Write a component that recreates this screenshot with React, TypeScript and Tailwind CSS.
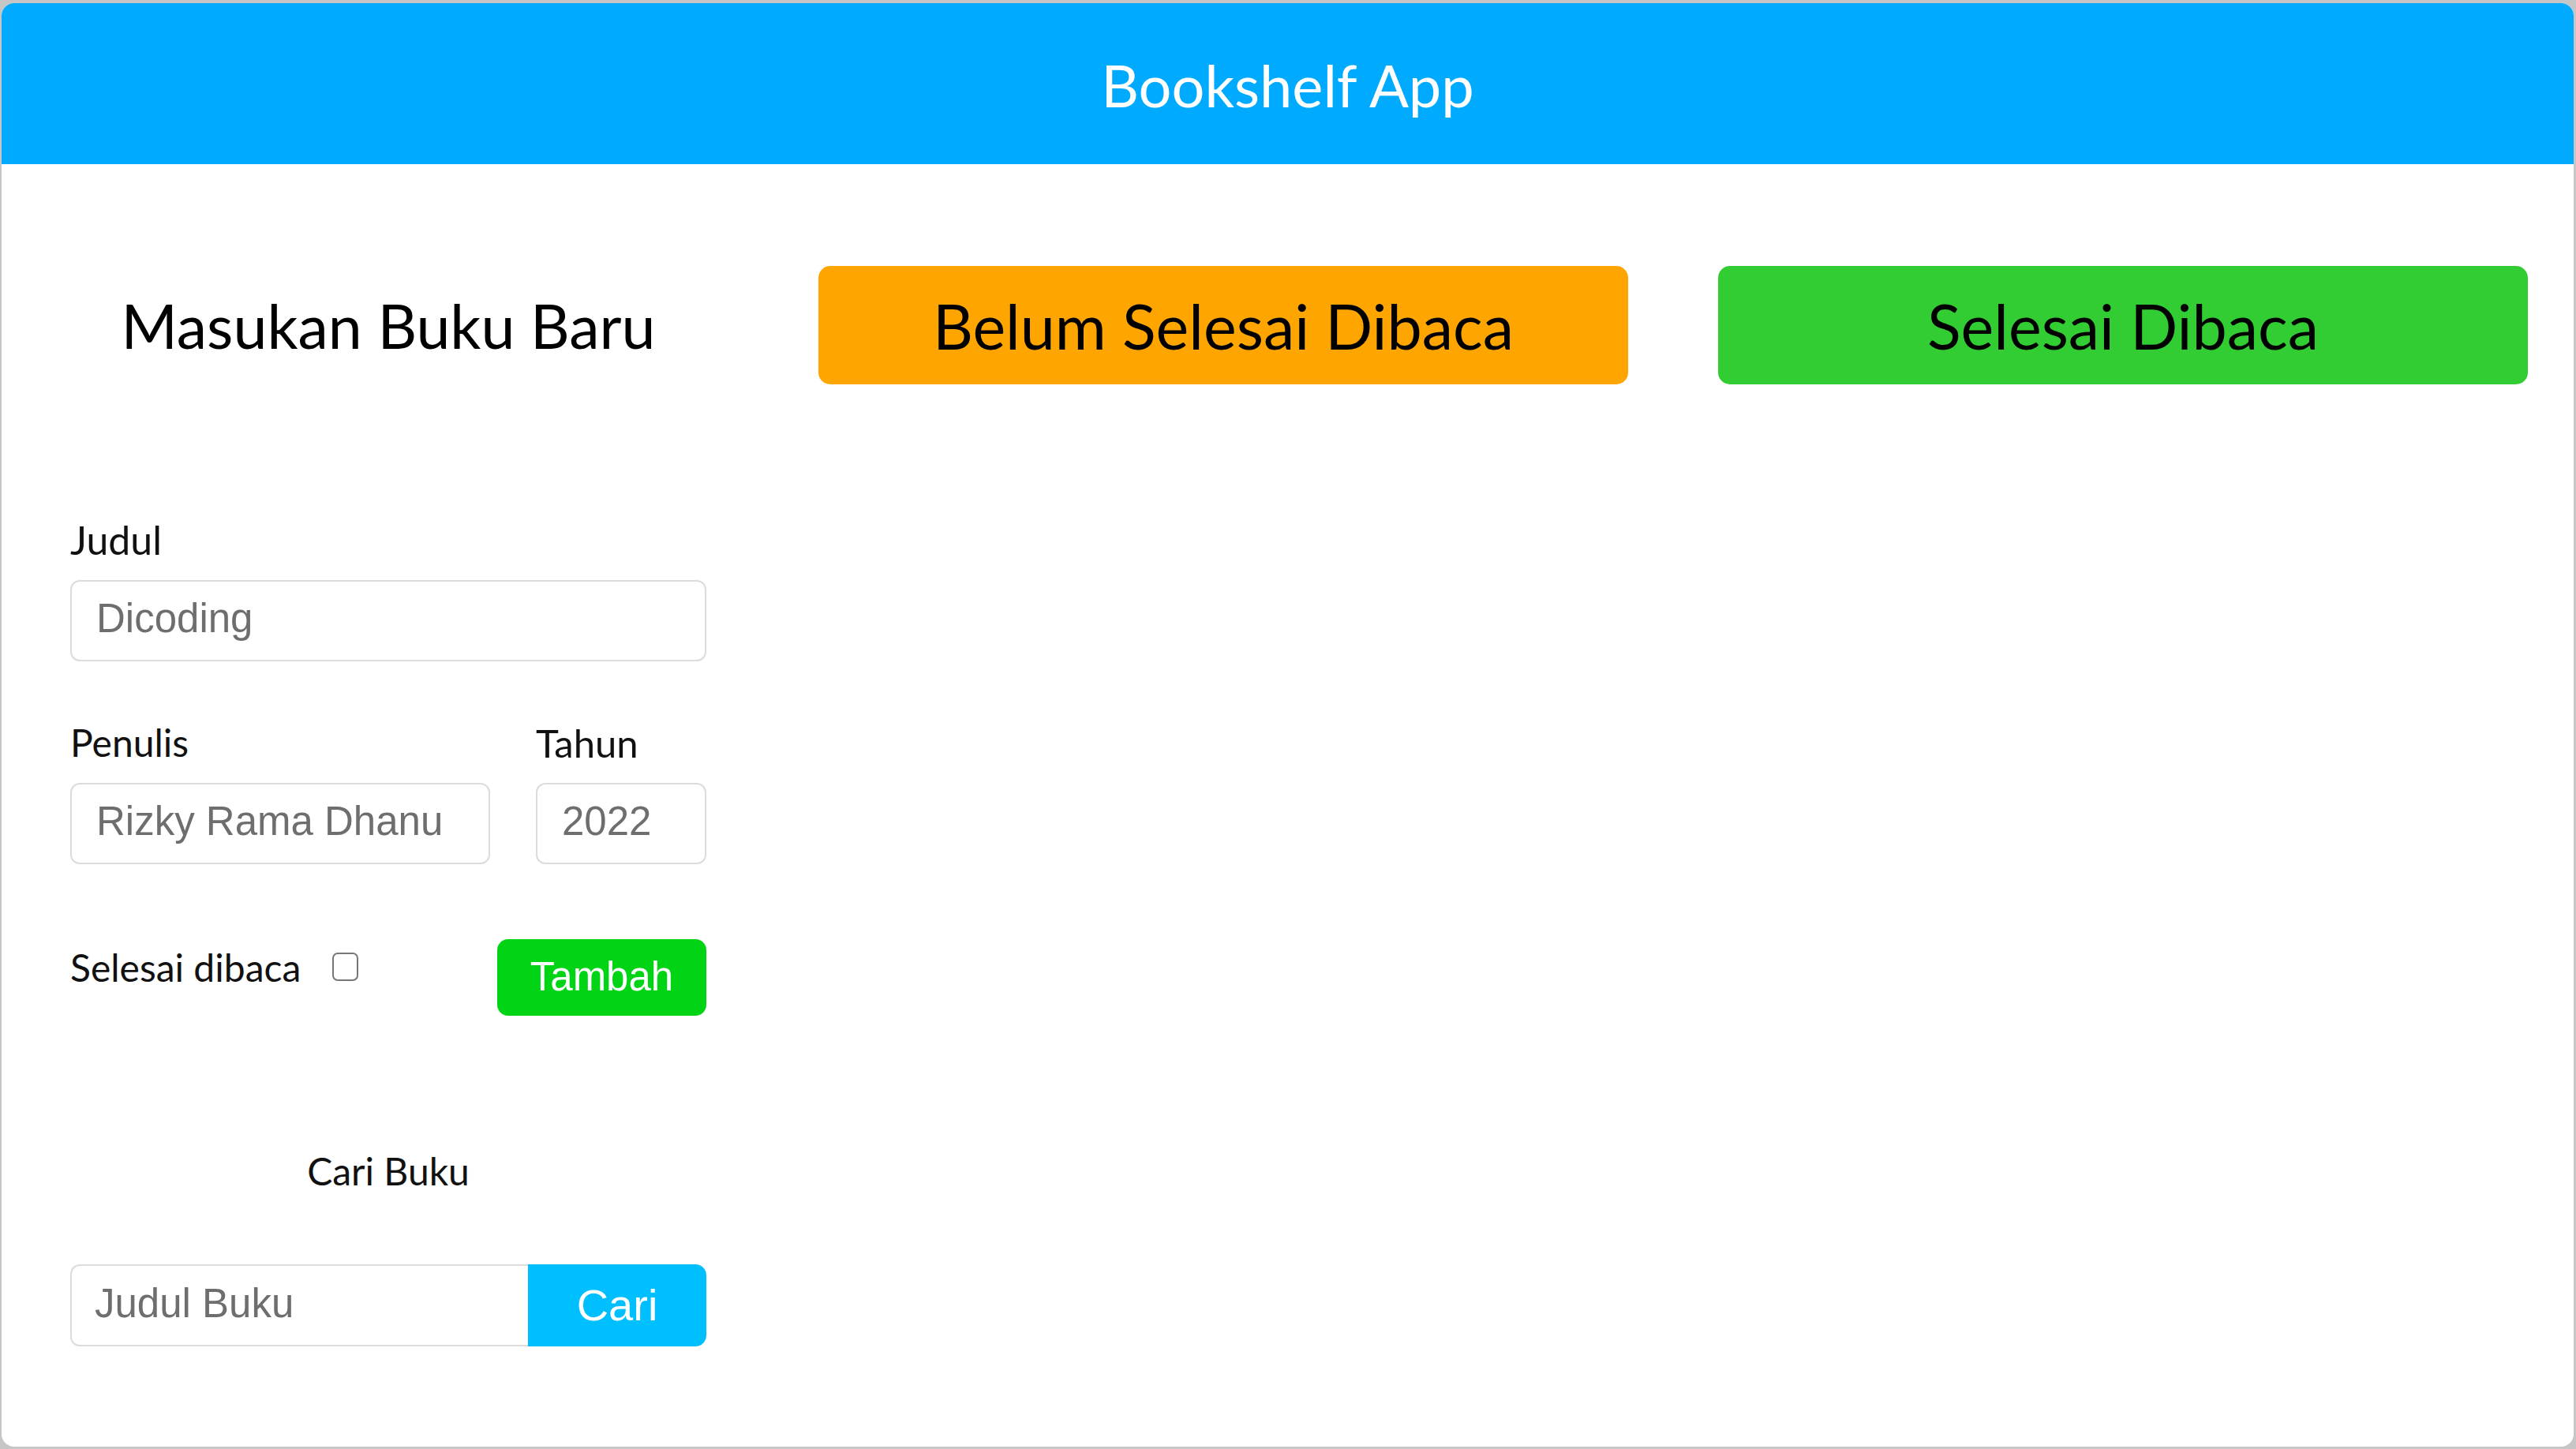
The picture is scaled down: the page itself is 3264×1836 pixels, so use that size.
import { useState } from 'react'

export default function App() {
  const [title, setTitle] = useState('')
  const [author, setAuthor] = useState('')
  const [year, setYear] = useState('')
  const [isComplete, setIsComplete] = useState(false)
  const [query, setQuery] = useState('')

  return (
    <div className="h-[1836px] w-full bg-[#c6c6c6] pt-[4px] pl-[2px] pr-[3px] pb-[3px]">
      <main className="h-full overflow-hidden rounded-[16px] bg-white font-['Lato',sans-serif] text-[#111]">
        {/* Header */}
        <header className="flex h-[204px] items-center justify-center bg-[#00aaff] pt-[4px]">
          <h1 className="text-[74px] leading-none text-white">Bookshelf App</h1>
        </header>

        <div className="flex items-start pl-[87px] pt-[129px]">
          {/* Input form */}
          <section className="w-[806px] shrink-0">
            <div className="flex h-[150px] items-center justify-center">
              <h2 className="text-[77px] leading-none text-black">Masukan Buku Baru</h2>
            </div>

            <form onSubmit={(e) => e.preventDefault()}>
              <label htmlFor="inputBookTitle" className="mt-[167px] mb-[21px] block text-[50px] leading-[60px]">
                Judul
              </label>
              <input
                id="inputBookTitle"
                value={title}
                onChange={(e) => setTitle(e.target.value)}
                placeholder="Dicoding"
                className="block h-[103px] w-full rounded-[12px] border-2 border-[#dcdcdc] pl-[31px] pb-[6px] font-['Liberation_Sans',Arial,sans-serif] text-[51px] outline-none placeholder:text-[#6e6e6e]"
              />

              <div className="mt-[73px] flex gap-[58px]">
                <div className="w-[532px] shrink-0">
                  <label htmlFor="inputBookAuthor" className="mb-[21px] block text-[48px] leading-[60px]">
                    Penulis
                  </label>
                  <input
                    id="inputBookAuthor"
                    value={author}
                    onChange={(e) => setAuthor(e.target.value)}
                    placeholder="Rizky Rama Dhanu"
                    className="block h-[103px] w-full rounded-[12px] border-2 border-[#dcdcdc] pl-[31px] pb-[6px] font-['Liberation_Sans',Arial,sans-serif] text-[51px] outline-none placeholder:text-[#6e6e6e]"
                  />
                </div>
                <div className="min-w-0 flex-1">
                  <label htmlFor="inputBookYear" className="mb-[21px] block text-[49px] leading-[60px]">
                    Tahun
                  </label>
                  <input
                    id="inputBookYear"
                    value={year}
                    onChange={(e) => setYear(e.target.value)}
                    placeholder="2022"
                    className="block h-[103px] w-full rounded-[12px] border-2 border-[#dcdcdc] pl-[31px] pb-[6px] font-['Liberation_Sans',Arial,sans-serif] text-[51px] outline-none placeholder:text-[#6e6e6e]"
                  />
                </div>
              </div>

              <div className="mt-[95px] flex items-start">
                <label htmlFor="inputBookIsComplete" className="mt-[6px] block w-[332px] shrink-0 text-[48px] leading-[60px]">
                  Selesai dibaca
                </label>
                <input
                  id="inputBookIsComplete"
                  type="checkbox"
                  checked={isComplete}
                  onChange={(e) => setIsComplete(e.target.checked)}
                  className="mt-[17px] h-[36px] w-[33px] appearance-none rounded-[7px] border-2 border-[#777] bg-white checked:bg-[#0075ff]"
                />
                <button
                  type="submit"
                  className="ml-auto h-[97px] w-[265px] rounded-[14px] bg-[#00d415] font-['Liberation_Sans',Arial,sans-serif] text-[51px] text-white"
                >
                  Tambah
                </button>
              </div>
            </form>

            {/* Search */}
            <p className="mt-[167px] text-center text-[48px] leading-[60px]">Cari Buku</p>
            <form onSubmit={(e) => e.preventDefault()} className="mt-[88px] flex h-[104px]">
              <input
                value={query}
                onChange={(e) => setQuery(e.target.value)}
                placeholder="Judul Buku"
                className="h-full min-w-0 flex-1 rounded-l-[12px] border-2 border-r-0 border-[#dcdcdc] pl-[29px] pb-[6px] font-['Liberation_Sans',Arial,sans-serif] text-[51px] outline-none placeholder:text-[#6e6e6e]"
              />
              <button
                type="submit"
                className="h-full w-[226px] shrink-0 rounded-r-[14px] bg-[#00bfff] font-['Liberation_Sans',Arial,sans-serif] text-[56px] text-white"
              >
                Cari
              </button>
            </form>
          </section>

          {/* Shelves */}
          <section className="ml-[142px] w-[1026px] shrink-0">
            <div className="flex h-[150px] items-center justify-center rounded-[15px] bg-[#ffa500]">
              <h2 className="text-[79px] leading-none text-black">Belum Selesai Dibaca</h2>
            </div>
          </section>
          <section className="ml-[114px] w-[1026px] shrink-0">
            <div className="flex h-[150px] items-center justify-center rounded-[15px] bg-[#32cd32]">
              <h2 className="text-[79px] leading-none text-black">Selesai Dibaca</h2>
            </div>
          </section>
        </div>
      </main>
    </div>
  )
}
